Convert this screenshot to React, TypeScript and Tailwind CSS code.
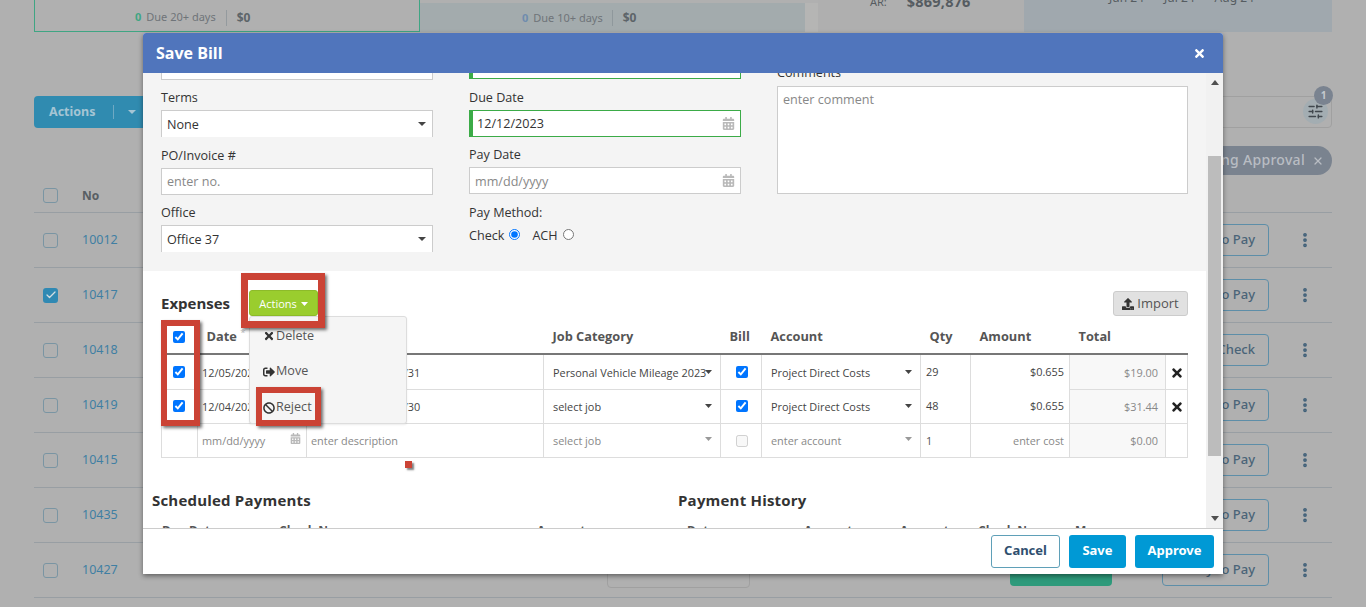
import { Check, EllipsisVertical, SlidersHorizontal, X } from "lucide-react";
import { FaBan, FaCalendarAlt, FaSignOutAlt, FaTimes, FaUpload } from "react-icons/fa";

const BG_ROWS = [
  { no: "10012", action: "Ready to Pay" },
  { no: "10417", action: "Ready to Pay", checked: true },
  { no: "10418", action: "Print Check" },
  { no: "10419", action: "Ready to Pay" },
  { no: "10415", action: "Ready to Pay" },
  { no: "10435", action: "Ready to Pay" },
  { no: "10427", action: "Ready to Pay", last: true },
];

function Caret({ muted = false, className = "" }: { muted?: boolean; className?: string }) {
  return (
    <svg width="8" height="4" viewBox="0 0 9 5" preserveAspectRatio="none" className={className}>
      <polygon points="0,0 9,0 4.5,5" fill={muted ? "#999" : "#444"} />
    </svg>
  );
}

function BgBox({ checked = false }: { checked?: boolean }) {
  if (checked) {
    return (
      <div className="w-[15px] h-[15px] rounded-[3px] bg-[#3089b3] flex items-center justify-center">
        <Check size={12} strokeWidth={2.5} className="text-[#d5dee2]" />
      </div>
    );
  }
  return <div className="w-[15px] h-[15px] rounded-[3px] border border-[#7a95a3]" />;
}

function Background() {
  return (
    <div className="px-[34px] font-['Noto_Sans',sans-serif]">
      {/* summary cards */}
      <div className="flex h-[32px] overflow-hidden">
        <div className="w-[386px] border border-t-0 border-[#3fa583] flex items-center pl-[100px] pt-[4px] text-[11px] text-[#6f7479]">
          <span className="font-bold text-[#3fa583] mr-[5px]">0</span>
          Due 20+ days
          <span className="w-px h-[16px] bg-[#949a9e] ml-[10px] mr-[10px]" />
          <span className="font-bold text-[12px] text-[#5d6469]">$0</span>
        </div>
        <div className="w-[385px] mt-[3px] bg-[#a3abad] flex items-center pl-[102px] pt-[1px] text-[11px] text-[#6f7479]">
          <span className="font-bold text-[#6f8cae] mr-[5px]">0</span>
          Due 10+ days
          <span className="w-px h-[16px] bg-[#8f989c] ml-[9px] mr-[10px]" />
          <span className="font-bold text-[12px] text-[#5d6469]">$0</span>
        </div>
        <div className="w-[13px] mt-[3px] bg-[#b5b5b4]" />
        <div className="w-[206px] bg-[#afafaf] flex items-start pl-[52px] -mt-[7px] h-[39px] text-[#565c61]">
          <span className="text-[11px] mt-[1px]">AR:</span>
          <span className="text-[14.5px] font-bold ml-[20px] tracking-[0.2px] -mt-[2px]">$869,876</span>
        </div>
        <div className="w-[308px] bg-[#a0a8ae] flex items-start pl-[85px] gap-[20px] text-[12px] text-[#565c61] -mt-[11px] h-[43px]">
          <span>Jun 24</span>
          <span>Jul 24</span>
          <span>Aug 24</span>
        </div>
      </div>

      {/* toolbar */}
      <div className="mt-[64px] flex items-center justify-between h-[32px]">
        <div className="w-[140px] h-[32px] rounded-[4px] bg-[#308bb0] flex items-center pl-[15px] text-[12.5px] font-bold text-[#a5c5d4]">
          Actions
          <span className="w-px h-[14px] bg-[#6fa9c3] ml-[18px] mr-[14px]" />
          <Caret className="[&_polygon]:fill-[#a5c5d4]" />
        </div>
        <div className="relative w-[300px] h-[32px] -mt-[1px] rounded-[4px] border border-[#a0a0a0] flex items-center justify-end pr-[3px]">
          <div className="w-[25px] h-[25px] rounded-full bg-[#a3adb2] flex items-center justify-center">
            <SlidersHorizontal size={17} className="text-[#40474d]" />
          </div>
          <span className="absolute -top-[11px] -right-[2px] w-[19px] h-[19px] rounded-full bg-[#7a8390] text-[10px] font-bold text-[#c4c9ce] flex items-center justify-center">
            1
          </span>
        </div>
      </div>

      {/* active filter */}
      <div className="mt-[18px] h-[29px] flex justify-end">
        <div className="h-[29px] pb-[2px] rounded-full bg-[#7a838f] flex items-center pl-[16px] pr-[8px] text-[14px] tracking-[0.3px] font-medium text-[#b9bdc3]">
          Pending Approval
          <X size={12} strokeWidth={2.5} className="ml-[7px] mt-[2px]" />
        </div>
      </div>

      {/* list */}
      <div className="mt-[4px] h-[34px] flex items-center border-b border-[#989ea3] pl-[9px]">
        <BgBox />
        <span className="ml-[24px] text-[12px] font-bold text-[#585e63]">No</span>
      </div>
      {BG_ROWS.map((row) => (
        <div key={row.no} className="relative h-[55px] flex items-center border-b border-[#989ea3] pl-[9px]">
          <BgBox checked={row.checked} />
          <span className="ml-[24px] text-[12.5px] text-[#3f7fa3]">{row.no}</span>
          {row.last && (
            <>
              <div className="ml-[489px] w-[143px] h-[33px] mt-[3px] rounded-[4px] border border-[#a0a0a0]" />
              <div className="ml-[260px] w-[102px] h-[32px] rounded-[4px] bg-[#2e9a7b]" />
            </>
          )}
          <div className="absolute right-[63px] top-[11px] w-[107px] h-[32px] rounded-[4px] border border-[#5d8ea8] flex items-center justify-end pr-[13px] text-[13px] font-medium text-[#4a6478]">
            {row.action}
          </div>
          <EllipsisVertical size={18} strokeWidth={3} className="absolute right-[18px] top-[18px] text-[#3f5f78]" />
        </div>
      ))}
    </div>
  );
}

function Label({ children, className = "" }: { children: string; className?: string }) {
  return <div className={`h-[20px] leading-[22px] text-[12.6px] text-[#333] ${className}`}>{children}</div>;
}

function SelectBox({ value }: { value: string }) {
  return (
    <div className="h-[27px] bg-white border border-b-0 border-[#ccc] flex items-center justify-between pl-[5px] pr-[6px] text-[12.6px] text-[#333]">
      <span className="pt-[3px]">{value}</span>
      <Caret />
    </div>
  );
}

function DateBox({ value, required = false }: { value?: string; required?: boolean }) {
  return (
    <div
      className={`h-[27px] bg-white flex items-center justify-between pr-[5px] text-[12.6px] ${
        required ? "border border-l-[4px] border-[#3bab47] pl-[4px]" : "border border-[#ccc] pl-[5px]"
      }`}
    >
      {value ? <span className="text-[#333] pt-[2px]">{value}</span> : <span className="text-[#888] pt-[3px]">mm/dd/yyyy</span>}
      <FaCalendarAlt size={13} className="text-[#b9b9b9]" />
    </div>
  );
}

function Annotation({ className }: { className: string }) {
  return <div className={`absolute border-[#cb4335] shadow-[2px_2px_3px_rgba(0,0,0,0.55)] ${className}`} />;
}

function CellCaret({ muted = false, top }: { muted?: boolean; top: string }) {
  return <Caret muted={muted} className={`absolute right-[8px] w-[7px] h-[4px] ${top}`} />;
}

function ExpenseRow({
  date,
  desc,
  job,
  qty,
  total,
  first = false,
}: {
  date: string;
  desc: string;
  job: string;
  qty: string;
  total: string;
  first?: boolean;
}) {
  const cell = "border border-[#ddd] px-[9px] pt-[2px] relative";
  const caretTop = first ? "top-[15px]" : "top-[14px]";
  return (
    <tr className={`${first ? "h-[35px]" : "h-[34px]"} text-[10.9px] text-[#444]`}>
      <td className="border border-[#ddd] text-center pr-[1px] pb-[2px]">
        <input type="checkbox" checked readOnly className="w-[12px] h-[12px] align-middle" />
      </td>
      <td className="border border-[#ddd] pl-[4px] pt-[2px] whitespace-nowrap overflow-hidden">{date}</td>
      <td className="border border-[#ddd] pl-[4px] pt-[2px] whitespace-nowrap overflow-hidden">{desc}</td>
      <td className={cell}>
        <span className="whitespace-nowrap">{job}</span>
        <CellCaret top={caretTop} />
      </td>
      <td className="border border-[#ddd] text-center pl-[1px] pb-[2px]">
        <input type="checkbox" checked readOnly className="w-[12px] h-[12px] align-middle" />
      </td>
      <td className={cell}>
        Project Direct Costs
        <CellCaret top={caretTop} />
      </td>
      <td className={`border-x border-[#ddd] pl-[5px] ${first ? "" : "border-b"}`}>{qty}</td>
      <td className={`border-x border-[#ddd] pr-[5px] text-right ${first ? "" : "border-b"}`}>$0.655</td>
      <td className="border border-[#ddd] bg-[#f8f8f8] pr-[7px] pt-[2px] text-right text-[#888]">{total}</td>
      <td className="border border-[#ddd] text-center pl-[1px]">
        <FaTimes size={14} className="inline text-[#222]" />
      </td>
    </tr>
  );
}

function ExpenseTable() {
  const th = "text-left font-bold text-[12.8px] text-[#555] align-middle";
  return (
    <div className="relative mt-[4px]">
      <table className="w-[1026px] table-fixed border-collapse font-['Open_Sans',sans-serif]">
        <colgroup>
          <col className="w-[36px]" />
          <col className="w-[109px]" />
          <col className="w-[237px]" />
          <col className="w-[177px]" />
          <col className="w-[41px]" />
          <col className="w-[159px]" />
          <col className="w-[50px]" />
          <col className="w-[99px]" />
          <col className="w-[96px]" />
          <col className="w-[22px]" />
        </colgroup>
        <thead>
          <tr className="h-[34px] border-b-2 border-[#777]">
            <th className="text-center pb-[2px] pr-[1px]">
              <input type="checkbox" checked readOnly className="w-[12px] h-[12px] align-middle" />
            </th>
            <th className={`${th} pl-[9px]`}>
              Date <sup className="text-[#bbb] font-normal">*</sup>
            </th>
            <th className={th}></th>
            <th className={`${th} pl-[9px]`}>Job Category</th>
            <th className={`${th} pl-[9px]`}>Bill</th>
            <th className={`${th} pl-[9px]`}>Account</th>
            <th className={`${th} pl-[9px]`}>Qty</th>
            <th className={`${th} pl-[9px]`}>Amount</th>
            <th className={`${th} pl-[9px]`}>Total</th>
            <th></th>
          </tr>
        </thead>
        <tbody>
          <ExpenseRow first date="12/05/2023" desc="Mileage 10/01 - 10/31" job="Personal Vehicle Mileage 2023" qty="29" total="$19.00" />
          <ExpenseRow date="12/04/2023" desc="Mileage 09/01 - 09/30" job="select job" qty="48" total="$31.44" />
          <tr className="h-[34px] text-[10.9px] text-[#888]">
            <td className="border border-[#ddd]"></td>
            <td className="border border-[#ddd] pl-[4px] pt-[2px] relative">
              mm/dd/yyyy
              <FaCalendarAlt size={11} className="absolute right-[5px] top-[9px] text-[#b9b9b9]" />
            </td>
            <td className="border border-[#ddd] pl-[4px] pt-[2px]">enter description</td>
            <td className="border border-[#ddd] px-[9px] pt-[2px] relative">
              select job
              <CellCaret muted top="top-[13px]" />
            </td>
            <td className="border border-[#ddd] text-center pl-[1px]">
              <input type="checkbox" disabled className="w-[12px] h-[12px] align-middle" />
            </td>
            <td className="border border-[#ddd] px-[9px] pt-[2px] relative">
              enter account
              <CellCaret muted top="top-[13px]" />
            </td>
            <td className="border border-[#ddd] pl-[5px] pt-[2px] text-[#555]">1</td>
            <td className="border border-[#ddd] pr-[5px] pt-[2px] text-right">enter cost</td>
            <td className="border border-[#ddd] bg-[#f8f8f8] pr-[7px] pt-[2px] text-right">$0.00</td>
            <td className="border border-[#ddd]"></td>
          </tr>
        </tbody>
      </table>
      <Annotation className="left-0 top-0 w-[39px] h-[106px] border-[6px]" />
    </div>
  );
}

function SubHead({ items }: { items: [string, string][] }) {
  return (
    <div className="flex mt-[12px] text-[12px] font-bold text-[#555] h-[20px]">
      {items.map(([text, width]) => (
        <span key={text} className={width}>
          {text}
        </span>
      ))}
    </div>
  );
}

function SaveBillModal() {
  return (
    <div className="absolute left-[143px] top-[33px] w-[1080px] h-[541px] bg-white flex flex-col shadow-[0_2px_5px_rgba(0,0,0,0.45)] rounded-t-[3px] font-['Open_Sans',sans-serif]">
      <div className="h-[40px] shrink-0 bg-[#5075bc] rounded-t-[3px] flex items-center justify-between pl-[13px] pr-[17px] text-white">
        <span className="text-[16px] font-bold">Save Bill</span>
        <FaTimes size={13} />
      </div>

      <div className="flex-1 min-h-0 flex">
        <div className="flex-1 min-w-0 overflow-hidden">
          {/* bill fields, scrolled part way */}
          <div className="h-[198px] bg-[#f4f4f4] px-[18px] flex gap-[36px]">
            <div className="w-[272px] shrink-0">
              <div className="h-[7px] bg-white border border-t-0 border-[#ccc]" />
              <Label className="mt-[7px]">Terms</Label>
              <div className="mt-[3px]"><SelectBox value="None" /></div>
              <Label className="mt-[8px]">PO/Invoice #</Label>
              <div className="mt-[3px] h-[27px] pt-[2px] bg-white border border-[#ccc] flex items-center pl-[5px] text-[12.6px] text-[#888]">enter no.</div>
              <Label className="mt-[7px]">Office</Label>
              <div className="mt-[3px]"><SelectBox value="Office 37" /></div>
            </div>
            <div className="w-[272px] shrink-0">
              <div className="h-[6px] bg-white border border-t-0 border-l-[4px] border-[#3bab47]" />
              <Label className="mt-[8px]">Due Date</Label>
              <div className="mt-[3px]"><DateBox value="12/12/2023" required /></div>
              <Label className="mt-[7px]">Pay Date</Label>
              <div className="mt-[3px]"><DateBox /></div>
              <Label className="mt-[8px]">Pay Method:</Label>
              <div className="mt-[3px] flex items-center h-[20px] text-[12.6px] text-[#333]">
                <span className="pt-[2px]">Check</span>
                <input type="radio" name="pay" checked readOnly className="ml-[5px] -mt-[2px] w-[11px] h-[11px]" />
                <span className="ml-[12px] pt-[2px]">ACH</span>
                <input type="radio" name="pay" readOnly checked={false} className="ml-[5px] -mt-[2px] w-[11px] h-[11px]" />
              </div>
            </div>
            <div className="w-[411px] shrink-0">
              <Label className="-mt-[11px]">Comments</Label>
              <div className="mt-[4px] h-[108px] bg-white border border-[#ccc] px-[5px] py-[4px] text-[12.6px] text-[#888]">enter comment</div>
            </div>
          </div>

          {/* expenses */}
          <div className="px-[18px] pt-[19px]">
            <div className="flex items-center h-[26px]">
              <span className="w-[88px] text-[15px] font-bold text-[#333]">Expenses</span>
              <div className="relative">
                <div className="w-[69px] h-[26px] pt-[2px] rounded-[3px] bg-[#9acd2e] border border-[#8dbb2a] flex items-center justify-center gap-[4px] text-[11px] text-white">
                  Actions
                  <Caret className="w-[7px] h-[4px] [&_polygon]:fill-white" />
                </div>
                <div className="absolute z-10 left-0 top-[26px] w-[158px] h-[108px] rounded-[3px] bg-[#f5f5f5] border border-[#ddd] shadow-[0_1px_2px_rgba(0,0,0,0.08)] pl-[13px] text-[12.6px] text-[#555]">
                  <div className="h-[36px] flex items-center gap-[1px] pt-[2px]">
                    <FaTimes size={12} className="text-[#333]" />
                    Delete
                  </div>
                  <div className="h-[36px] flex items-center gap-[1px] pt-[1px]">
                    <FaSignOutAlt size={12} className="text-[#333]" />
                    Move
                  </div>
                  <div className="relative h-[36px] flex items-center gap-[1px] pt-[1px]">
                    <FaBan size={12} className="text-[#333]" />
                    Reject
                    <Annotation className="-left-[7px] top-[-2px] w-[65px] h-[39px] border-[6px]" />
                  </div>
                </div>
                <Annotation className="z-20 -left-[8px] -top-[17px] w-[84px] h-[55px] border-[7px] pointer-events-none" />
              </div>
              <div className="ml-auto w-[75px] h-[25px] pt-[1px] rounded-[3px] bg-[#e1e1e1] border border-[#ccc] flex items-center justify-center gap-[3px] text-[13px] text-[#555]">
                <FaUpload size={12} className="text-[#333]" />
                Import
              </div>
            </div>

            <ExpenseTable />
            <div className="absolute left-[262px] top-[428px] w-[7px] h-[7px] bg-[#cb4335] shadow-[2px_2px_2px_rgba(0,0,0,0.5)]" />

            <div className="mt-[32px] -ml-[9px] flex">
              <div className="w-[526px] shrink-0">
                <div className="text-[15px] tracking-[0.2px] font-bold text-[#333] leading-[20px]">Scheduled Payments</div>
                <SubHead
                  items={[
                    ["", "w-[10px]"],
                    ["Due Date", "w-[117px]"],
                    ["Check No", "w-[258px]"],
                    ["Amount", "w-[80px]"],
                  ]}
                />
              </div>
              <div className="flex-1">
                <div className="text-[15px] tracking-[0.2px] font-bold text-[#333] leading-[20px]">Payment History</div>
                <SubHead
                  items={[
                    ["", "w-[9px]"],
                    ["Date", "w-[117px]"],
                    ["Amount", "w-[96px]"],
                    ["Account", "w-[78px]"],
                    ["Check No", "w-[97px]"],
                    ["Memo", "w-[60px]"],
                  ]}
                />
              </div>
            </div>
          </div>
        </div>

        {/* scrollbar */}
        <div className="w-[17px] shrink-0 bg-[#f1f1f1] flex flex-col items-center relative">
          <svg width="8" height="5" viewBox="0 0 8 5" className="mt-[7px]">
            <polygon points="0,5 8,5 4,0" fill="#505050" />
          </svg>
          <div className="absolute top-[83px] left-[2px] w-[13px] h-[300px] bg-[#bcbcbc]" />
          <svg width="8" height="5" viewBox="0 0 8 5" className="mt-auto mb-[7px]">
            <polygon points="0,0 8,0 4,5" fill="#505050" />
          </svg>
        </div>
      </div>

      <div className="h-[46px] shrink-0 border-t border-[#ccc] bg-white flex items-center justify-end gap-[9px] pr-[9px] font-['Noto_Sans',sans-serif] text-[13px] font-bold">
        <div className="w-[69px] h-[33px] pb-[2px] rounded-[3px] border border-[#5fa0b8] text-[#2f4f6f] flex items-center justify-center">Cancel</div>
        <div className="w-[57px] h-[33px] pb-[2px] rounded-[3px] bg-[#0099d5] text-white flex items-center justify-center">Save</div>
        <div className="w-[79px] h-[33px] pb-[2px] rounded-[3px] bg-[#0099d5] text-white flex items-center justify-center">Approve</div>
      </div>
    </div>
  );
}

export default function App() {
  return (
    <div className="relative h-[607px] overflow-hidden bg-[#b0b0b0]">
      <Background />
      <SaveBillModal />
    </div>
  );
}
